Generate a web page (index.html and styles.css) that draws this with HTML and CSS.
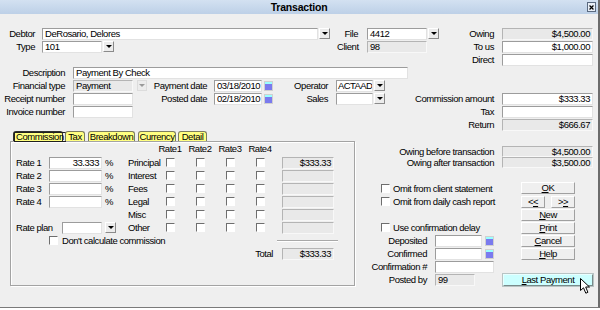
FILE: index.html
```html
<!doctype html>
<html>
<head>
    <meta charset="UTF-8">
    <title>Transaction</title>
    <link rel="stylesheet" href="styles.css">
</head>
<body>
<div class="window">
    <div class="titlebar">
        <span class="title">Transaction</span>
        <span class="close"><svg width="9" height="9" viewBox="0 0 9 9"><path d="M2 2L7 7M7 2L2 7" stroke="#000" stroke-width="1.6"/></svg></span>
    </div>
    <div class="client">
        <!-- debtor / file / owing -->
        <div class="band">
            <div class="blk debtor">
                <div class="row"><span class="lbl">Debtor</span><span class="fld debtor-name">DeRosario, Delores</span><span class="drop"></span></div>
                <div class="row"><span class="lbl">Type</span><span class="fld short">101</span><span class="drop"></span></div>
            </div>
            <div class="blk file">
                <div class="row"><span class="lbl">File</span><span class="fld short">4412</span><span class="drop"></span></div>
                <div class="row"><span class="lbl">Client</span><span class="fld short ro">98</span></div>
            </div>
            <div class="blk money money-top">
                <div class="row"><span class="lbl">Owing</span><span class="fld amt ro">$4,500.00</span></div>
                <div class="row"><span class="lbl">To us</span><span class="fld amt">$1,000.00</span></div>
                <div class="row"><span class="lbl">Direct</span><span class="fld amt"></span></div>
            </div>
        </div>

        <!-- payment details -->
        <div class="band">
            <div class="blk payment">
                <div class="row"><span class="lbl">Description</span><span class="fld desc">Payment By Check</span></div>
                <div class="row">
                    <span class="lbl">Financial type</span><span class="fld short ro">Payment</span><span class="drop off"></span>
                    <span class="lbl mid">Payment date</span><span class="fld date">03/18/2010</span><span class="cal"></span>
                    <span class="lbl op">Operator</span><span class="fld code">ACTAAD</span><span class="drop"></span>
                </div>
                <div class="row">
                    <span class="lbl">Receipt number</span><span class="fld short"></span><span class="gap"></span>
                    <span class="lbl mid">Posted date</span><span class="fld date">02/18/2010</span><span class="cal"></span>
                    <span class="lbl op">Sales</span><span class="fld code"></span><span class="drop"></span>
                </div>
                <div class="row"><span class="lbl">Invoice number</span><span class="fld short"></span></div>
            </div>
            <div class="blk money money-mid">
                <div class="row"><span class="lbl">Commission amount</span><span class="fld amt">$333.33</span></div>
                <div class="row"><span class="lbl">Tax</span><span class="fld amt"></span></div>
                <div class="row"><span class="lbl">Return</span><span class="fld amt ro">$666.67</span></div>
            </div>
        </div>

        <!-- tabs + actions -->
        <div class="band">
            <div class="tabs-area">
                <div class="tabstrip">
                    <span class="tab active"><span>Commission</span></span>
                    <span class="tab t-tax">Tax</span>
                    <span class="tab t-brk">Breakdown</span>
                    <span class="tab t-cur">Currency</span>
                    <span class="tab t-det">Detail</span>
                </div>
                <div class="panel">
                    <span class="hdr">Rate1</span><span class="hdr">Rate2</span><span class="hdr">Rate3</span><span class="hdr">Rate4</span>

                    <span class="rl">Rate 1</span><span class="fld rate">33.333</span><span class="pct">%</span><span class="kind">Principal</span>
                    <span class="chk"></span><span class="chk"></span><span class="chk"></span><span class="chk"></span><span class="fld sum ro">$333.33</span>

                    <span class="rl">Rate 2</span><span class="fld rate"></span><span class="pct">%</span><span class="kind">Interest</span>
                    <span class="chk"></span><span class="chk"></span><span class="chk"></span><span class="chk"></span><span class="fld sum ro"></span>

                    <span class="rl">Rate 3</span><span class="fld rate"></span><span class="pct">%</span><span class="kind">Fees</span>
                    <span class="chk"></span><span class="chk"></span><span class="chk"></span><span class="chk"></span><span class="fld sum ro"></span>

                    <span class="rl">Rate 4</span><span class="fld rate"></span><span class="pct">%</span><span class="kind">Legal</span>
                    <span class="chk"></span><span class="chk"></span><span class="chk"></span><span class="chk"></span><span class="fld sum ro"></span>

                    <span class="kind first">Misc</span>
                    <span class="chk"></span><span class="chk"></span><span class="chk"></span><span class="chk"></span><span class="fld sum ro"></span>

                    <span class="rl">Rate plan</span><span class="fld plan"></span><span class="drop plan-drop"></span><span class="kind">Other</span>
                    <span class="chk"></span><span class="chk"></span><span class="chk"></span><span class="chk"></span><span class="fld sum ro"></span>

                    <span class="nocalc"><span class="chk"></span>Don't calculate commission</span>
                    <span class="sep"></span>

                    <span class="total">Total</span><span class="fld sum ro">$333.33</span>
                </div>
            </div>

            <div class="side">
                <div class="row thin"><span class="lbl">Owing before transaction</span><span class="fld amt ro">$4,500.00</span></div>
                <div class="row thin"><span class="lbl">Owing after transaction</span><span class="fld amt ro">$3,500.00</span></div>

                <div class="actions">
                    <div class="checks">
                        <div class="row opt"><span class="chk"></span>Omit from client statement</div>
                        <div class="row opt"><span class="chk"></span>Omit from daily cash report</div>
                        <div class="row"></div>
                        <div class="row opt"><span class="chk"></span>Use confirmation delay</div>
                        <div class="row"><span class="lbl">Deposited</span><span class="fld conf"></span><span class="cal"></span></div>
                        <div class="row"><span class="lbl">Confirmed</span><span class="fld conf"></span><span class="cal"></span></div>
                        <div class="row"><span class="lbl">Confirmation #</span><span class="fld conf-no"></span></div>
                        <div class="row"><span class="lbl">Posted by</span><span class="fld by ro">99</span></div>
                    </div>
                    <div class="buttons">
                        <span class="btn ok"><u>O</u>K</span>
                        <div class="pager"><span class="btn">&lt;<u>&lt;</u></span><span class="btn">&gt;<u>&gt;</u></span></div>
                        <span class="btn"><u>N</u>ew</span>
                        <span class="btn"><u>P</u>rint</span>
                        <span class="btn"><u>C</u>ancel</span>
                        <span class="btn"><u>H</u>elp</span>
                        <span class="btn last"><u>L</u>ast Payment</span>
                    </div>
                </div>
            </div>
        </div>
    </div>

    <svg class="cursor" width="11" height="17" viewBox="0 0 11 17"><path d="M0.5 0.5V12.5L3.5 9.8L5.8 15.2L7.9 14.3L5.7 9H9.5Z" fill="#fff" stroke="#000" stroke-width="1"/></svg>
</div>
</body>
</html>
```

FILE: styles.css
```css
* {
    margin: 0;
    padding: 0;
    box-sizing: border-box;
}

body {
    background: #fff;
    font: 9.5px/12px "Liberation Sans", Arial, sans-serif;
    letter-spacing: -0.45px;
    color: #000;
}

.window {
    position: relative;
    width: 600px;
    height: 308px;
    background: #efefef;
    border-right: 2px solid #6c6c6c;
    border-bottom: 1px solid #7a7a7a;
}

.titlebar {
    position: relative;
    height: 14px;
    display: flex;
    align-items: center;
    justify-content: center;
    background: linear-gradient(#d3e1f1, #bdd0e7);
}

.title {
    font-weight: bold;
    font-size: 10.5px;
    letter-spacing: -0.2px;
}

.close {
    position: absolute;
    right: 2px;
    top: 2px;
    width: 9px;
    height: 10px;
    display: flex;
    align-items: center;
    justify-content: center;
    background: #e8eef6;
    border: 1px solid #5a6a80;
}

.client {
    padding-top: 13px;
}

.band {
    display: flex;
}

.row {
    display: flex;
    align-items: center;
    height: 13px;
    white-space: nowrap;
}

.lbl {
    flex: none;
    text-align: right;
}

/* fields */
.fld {
    flex: none;
    display: block;
    height: 12px;
    line-height: 10px;
    padding: 0 2px;
    background: #fff;
    border: 1px solid;
    border-color: #9c9c9c #e2e2e2 #e2e2e2 #9c9c9c;
    overflow: hidden;
    white-space: nowrap;
}

.fld.ro {
    background: #e9e9e9;
    border-color: #b4b4b4 #f8f8f8 #f8f8f8 #b4b4b4;
}

.drop {
    flex: none;
    width: 11px;
    height: 11px;
    margin-left: 1px;
    display: flex;
    align-items: center;
    justify-content: center;
    background: #ececec;
    border: 1px solid;
    border-color: #fff #8a8a8a #8a8a8a #fff;
}

.drop::after {
    content: "";
    border-left: 3px solid transparent;
    border-right: 3px solid transparent;
    border-top: 3px solid #000;
}

.drop.off {
    margin-left: 4px;
    width: 10px;
    border-color: #dcdcdc;
}

.drop.off::after {
    border-top-color: #9a9a9a;
}

.cal {
    flex: none;
    width: 9px;
    height: 10px;
    margin-left: 2px;
    border: 1px solid #d0d0d0;
    background: linear-gradient(#9ff 0, #9ff 2px, #7a7aee 2px);
}

.chk {
    flex: none;
    display: block;
    width: 9px;
    height: 9px;
    background: #fff;
    border: 1px solid;
    border-color: #6e6e6e #fff #fff #6e6e6e;
}

/* top band */
.debtor {
    width: 337px;
}

.debtor .lbl {
    width: 35px;
    margin-right: 7px;
}

.debtor-name {
    width: 276px;
}

.short {
    width: 60px;
}

.file {
    width: 102px;
}

.file .lbl {
    width: 21px;
    margin-right: 9px;
}

.amt {
    width: 91px;
    text-align: right;
}

.money .lbl {
    margin-right: 8px;
}

.money-top .lbl {
    width: 55px;
}

/* payment band */
.payment {
    width: 410px;
}

.payment .lbl {
    width: 65px;
    margin-right: 8px;
}

.payment .lbl.mid {
    width: 60px;
    margin-right: 7px;
}

.payment .lbl.op {
    width: 55px;
    margin-right: 8px;
}

.desc {
    width: 335px;
}

.gap {
    flex: none;
    width: 14px;
}

.date {
    width: 48px;
}

.code {
    width: 37px;
    padding: 0 1px;
    letter-spacing: -0.6px;
}

.money-mid {
    padding-top: 26px;
}

.money-mid .lbl {
    width: 84px;
}

/* tabs */
.tabs-area {
    width: 345px;
    margin-left: 10px;
}

.tabstrip {
    display: flex;
    gap: 2px;
    height: 10px;
    padding-left: 3px;
}

.tab {
    width: 50px;
    height: 10px;
    line-height: 10px;
    text-align: center;
    background: #ffff80;
    border: 1px solid #7c7c60;
    border-bottom: none;
    border-radius: 3px 3px 0 0;
    white-space: nowrap;
}

.tab.active {
    border-color: #303030;
    line-height: 8px;
}

.tab.active span {
    display: inline-block;
    border: 1px solid #202020;
    padding: 0 1px;
}

.t-tax {
    width: 20px;
}

.t-brk {
    width: 47px;
    margin-left: 1px;
}

.t-cur {
    width: 38px;
    margin-left: 1px;
}

.t-det {
    width: 29px;
}

.panel {
    height: 145px;
    display: grid;
    grid-template-columns: 33px 53px 26px 27px repeat(4, 30px) 7px 52px;
    grid-template-rows: 14px repeat(8, 13px);
    align-items: center;
    align-content: start;
    padding-left: 5px;
    border: 1px solid #a3a3a3;
    box-shadow: inset 1px 1px #fff, 1px 1px #fff;
    white-space: nowrap;
}

.hdr {
    text-align: center;
}

.hdr:first-child {
    grid-column: 5;
}

.rl {
    grid-column: 1;
}

.rate {
    width: 53px;
    text-align: right;
}

.pct {
    padding-left: 3px;
}

.kind {
    grid-column: 4;
}

.panel .chk {
    justify-self: center;
}

.sum {
    grid-column: 10;
    width: 52px;
    text-align: right;
}

.plan {
    width: 40px;
    margin-left: 13px;
}

.plan-drop {
    margin-left: 3px;
}

.nocalc {
    grid-column: 2 / span 6;
    display: flex;
    align-items: center;
    gap: 4px;
}

.sep {
    grid-column: 9 / span 2;
    align-self: end;
    width: 61px;
    height: 2px;
    margin: 0 0 5px 2px;
    border-top: 1px solid #a8a8a8;
    border-bottom: 1px solid #fff;
}

.total {
    grid-column: 8;
    text-align: right;
    padding-right: 2px;
}

.total + .sum {
    grid-column: 10;
}

/* right side */
.side {
    width: 241px;
    padding-top: 15px;
}

.side .row.thin {
    height: 11px;
}

.side .thin .lbl {
    width: 139px;
    margin-right: 8px;
}

.side .thin .fld {
    height: 11px;
    line-height: 9px;
}

.actions {
    display: flex;
    margin-top: 14px;
}

.checks {
    width: 148px;
}

.opt {
    padding-left: 26px;
    gap: 3px;
}

.checks .lbl {
    width: 72px;
    margin-right: 8px;
}

.conf {
    width: 47px;
}

.checks .cal {
    margin-left: 3px;
}

.conf-no {
    width: 59px;
}

.by {
    width: 40px;
}

.buttons {
    width: 90px;
    display: flex;
    flex-direction: column;
    align-items: center;
}

.btn {
    display: block;
    width: 54px;
    height: 12px;
    margin-bottom: 1px;
    line-height: 10px;
    text-align: center;
    background: #efefef;
    border: 1px solid;
    border-color: #fff #a0a0a0 #a0a0a0 #fff;
}

.btn.ok {
    margin-bottom: 2px;
}

.pager {
    display: flex;
    gap: 6px;
}

.pager .btn {
    width: 24px;
}

.btn.last {
    width: 90px;
    margin-top: 13px;
    background: #ccffff;
    border-color: #e8ffff #7a8a8a #7a8a8a #e8ffff;
    outline: 1px solid #b8c4c4;
}

.cursor {
    position: absolute;
    left: 580px;
    top: 278px;
}
```
